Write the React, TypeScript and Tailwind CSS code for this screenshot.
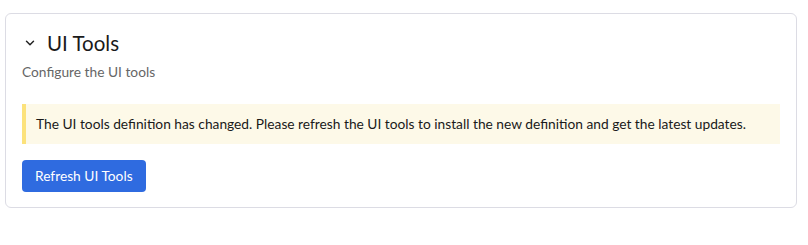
import React from "react";
import { ChevronDown } from "lucide-react";

const App = () => {
  return (
    <div className="bg-white w-[808px] h-[245px] pt-[13px] px-[5px] font-['Lato',sans-serif]">
      <div className="w-[792px] border border-[#dcdce4] rounded-[6px] pl-[16px] pr-[16px] pt-[15px] pb-[15px]">
        {/* header */}
        <div className="flex items-center h-[28px]">
          <ChevronDown className="w-[14px] h-[14px] text-[#222] ml-[1px] mr-[10px]" strokeWidth={2.5} />
          <h2 className="text-[20.5px] text-[#1a1a1a] leading-[28px]">UI Tools</h2>
        </div>
        <p className="text-[13.75px] text-[#666] mt-[6px] leading-[18px]">Configure the UI tools</p>

        {/* warning */}
        <div className="mt-[23px] bg-[#fdf9e8] border-l-[4px] border-[#fce27b] h-[40px] flex items-center pl-[10px]">
          <span className="text-[13.75px] text-[#1a1a1a]">
            The UI tools definition has changed. Please refresh the UI tools to install the new definition and get the latest updates.
          </span>
        </div>

        <button className="mt-[16px] bg-[#2f6be0] text-white text-[13.75px] rounded-[4px] h-[32px] px-[13px]">
          Refresh UI Tools
        </button>
      </div>
    </div>
  );
};

export default App;
